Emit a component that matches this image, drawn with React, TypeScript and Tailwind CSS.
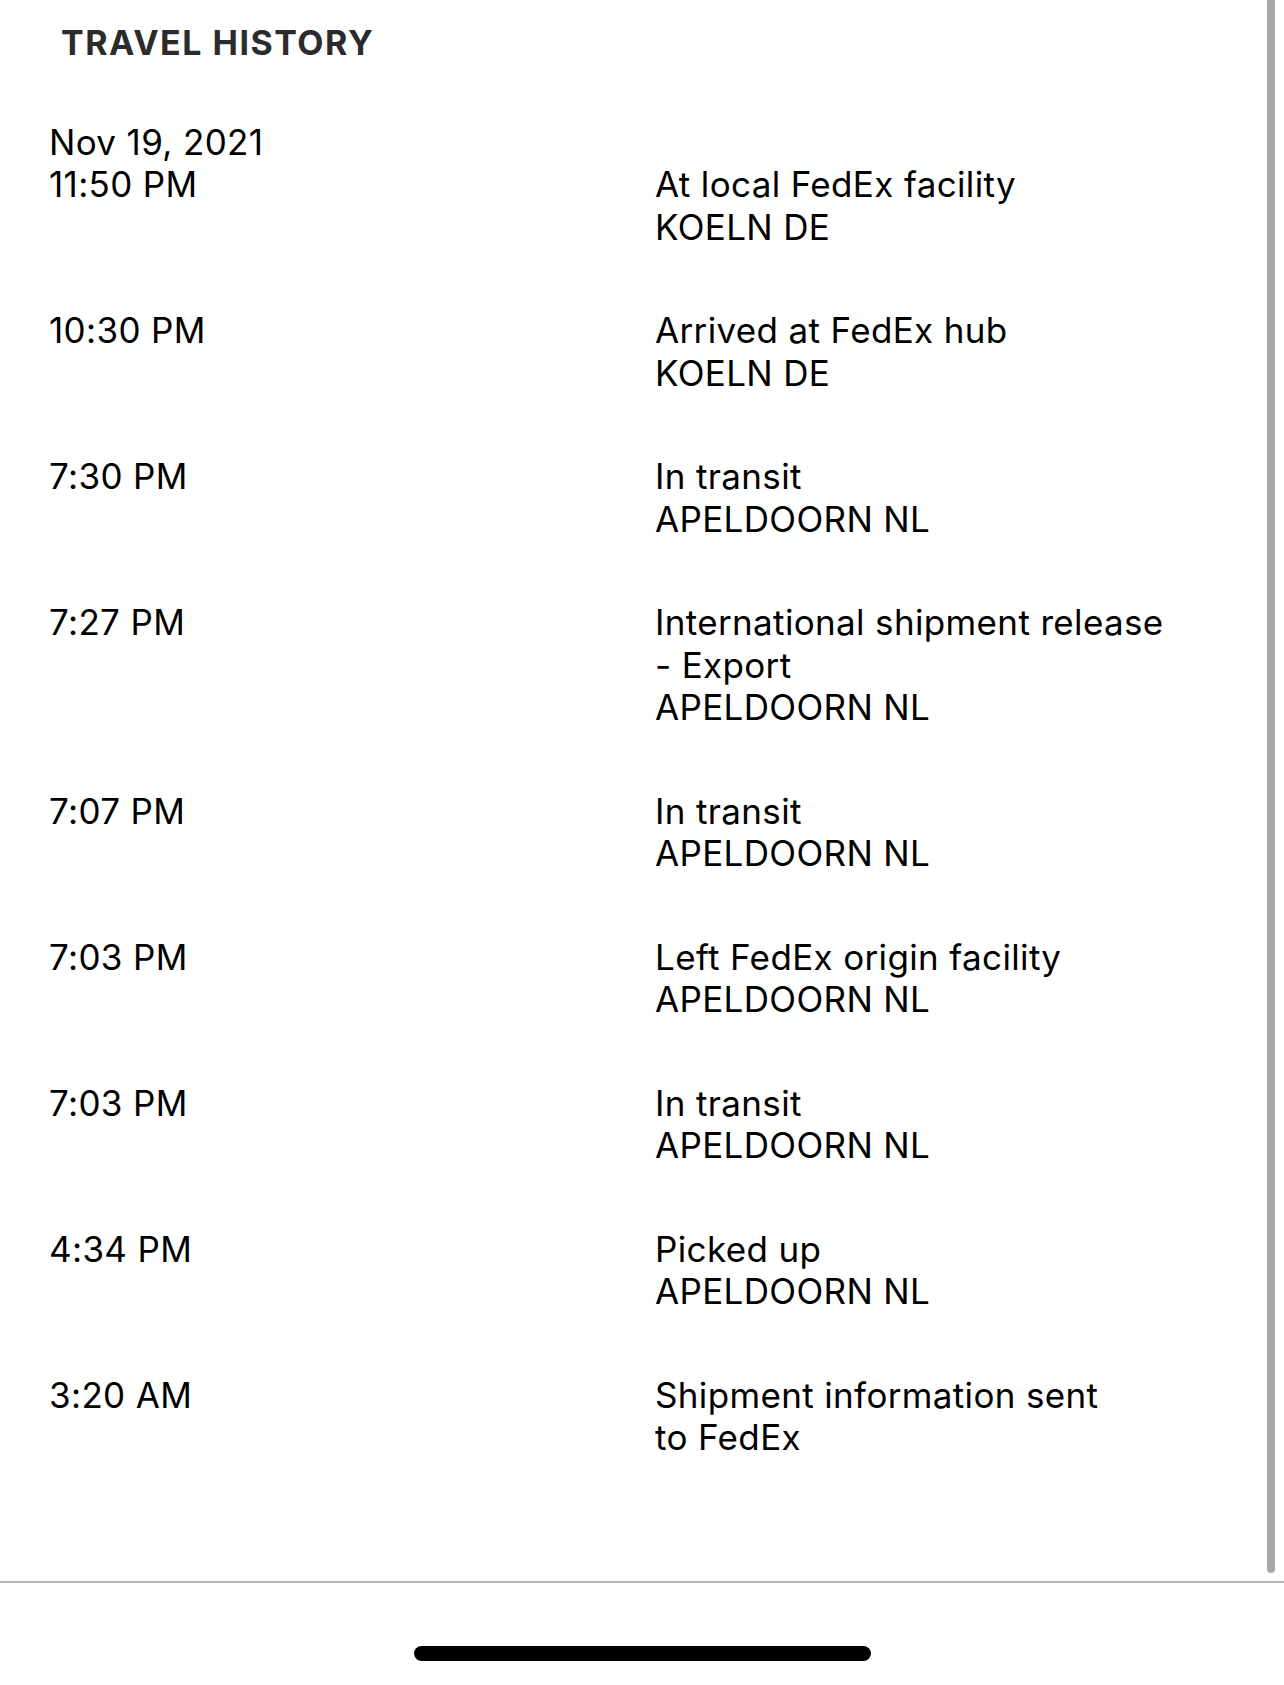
import React from "react";

type Event = {
  time: string;
  lines: string[];
};

const events: Event[] = [
  { time: "11:50 PM", lines: ["At local FedEx facility", "KOELN DE"] },
  { time: "10:30 PM", lines: ["Arrived at FedEx hub", "KOELN DE"] },
  { time: "7:30 PM", lines: ["In transit", "APELDOORN NL"] },
  { time: "7:27 PM", lines: ["International shipment release", "- Export", "APELDOORN NL"] },
  { time: "7:07 PM", lines: ["In transit", "APELDOORN NL"] },
  { time: "7:03 PM", lines: ["Left FedEx origin facility", "APELDOORN NL"] },
  { time: "7:03 PM", lines: ["In transit", "APELDOORN NL"] },
  { time: "4:34 PM", lines: ["Picked up", "APELDOORN NL"] },
  { time: "3:20 AM", lines: ["Shipment information sent", "to FedEx"] },
];

export default function App() {
  return (
    <div
      className="w-[1284px] h-[1685px] bg-white flex flex-col overflow-hidden"
      style={{ fontFamily: "Inter, 'Noto Sans', sans-serif" }}
    >
      <div className="relative h-[1581px] shrink-0">
        {/* scroll indicator */}
        <div className="absolute right-[9px] top-0 w-[8px] h-[1573px] rounded-b-full bg-[#a8a8a8]" />

        <h1 className="pl-[61px] pt-[24px] text-[34px] leading-[38px] font-bold tracking-[1.5px] text-[#2b2b2b]">
          TRAVEL HISTORY
        </h1>

        <div className="pl-[49px] pt-[59px] text-[35px] leading-[42.4px] tracking-[0.35px] text-black">
          <div>Nov 19, 2021</div>
          <div className="flex flex-col gap-y-[61.2px]">
            {events.map((e, i) => (
              <div key={i} className="grid grid-cols-[606px_1fr]">
                <div>{e.time}</div>
                <div>
                  {e.lines.map((l, j) => (
                    <div key={j}>{l}</div>
                  ))}
                </div>
              </div>
            ))}
          </div>
        </div>
      </div>

      <div className="h-[2px] bg-[#b5b5b5] shrink-0" />

      <div className="flex-1 flex justify-center pt-[63px]">
        <div className="w-[457px] h-[15px] rounded-full bg-black" />
      </div>
    </div>
  );
}
